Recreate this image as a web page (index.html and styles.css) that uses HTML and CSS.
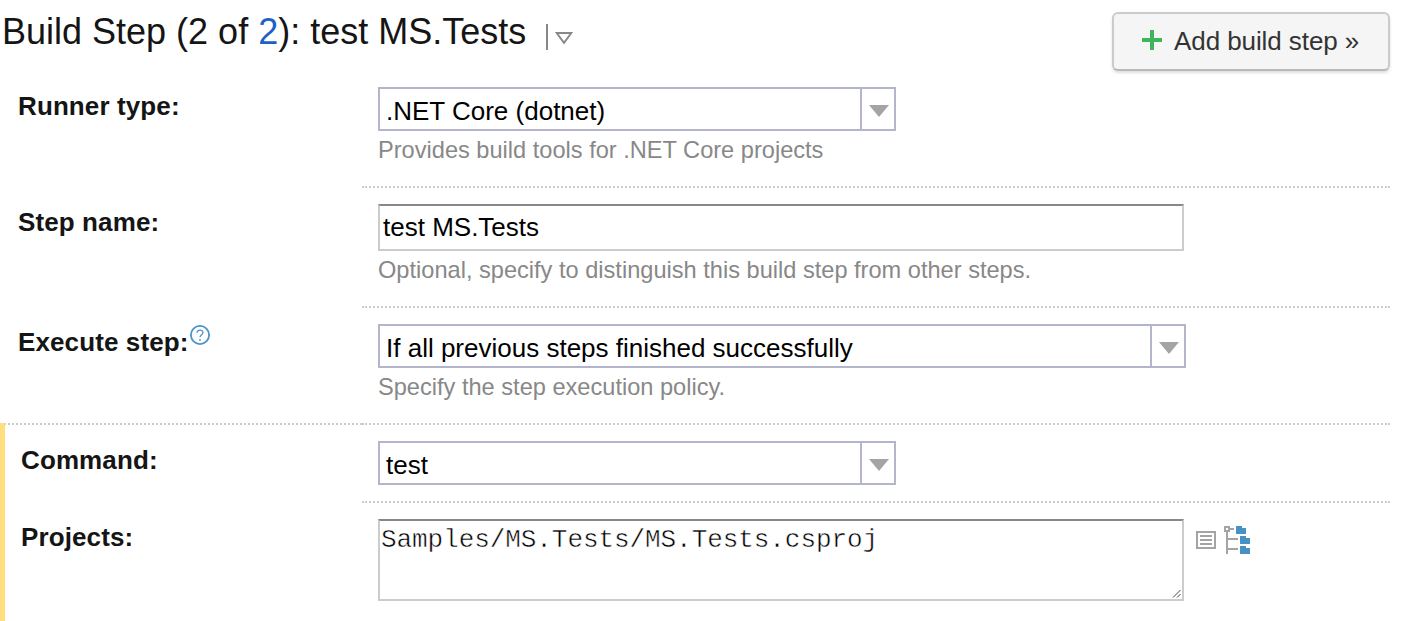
FILE: index.html
```html
<!DOCTYPE html>
<html lang="en">
<head>
<meta charset="utf-8">
<title>Build Step</title>
<link rel="stylesheet" href="styles.css">
</head>
<body>
<header class="header">
  <h1 class="title">Build Step (2 of <a class="count">2</a>): test MS.Tests</h1>
  <span class="title-menu"><svg width="18" height="14" viewBox="0 0 18 14"><path d="M1.7 2H16.3L9 11.8Z" fill="none" stroke="#888" stroke-width="1.9"/></svg></span>
  <button class="add-button"><svg class="plus" width="20" height="20" viewBox="0 0 20 20"><path d="M8 0h4v8h8v4h-8v8H8v-8H0V8h8z" fill="#3fb55d"/></svg><span>Add build step »</span></button>
</header>
<main class="form">
  <section class="row row-runner">
    <div class="label">Runner type:</div>
    <div class="field">
      <div class="select"><span class="value">.NET Core (dotnet)</span><span class="arrow"><svg width="20" height="12" viewBox="0 0 20 12"><path d="M0 0H20L10 12Z" fill="#a4a4a4"/></svg></span></div>
      <p class="note">Provides build tools for .NET Core projects</p>
    </div>
  </section>
  <section class="row row-name">
    <div class="label">Step name:</div>
    <div class="field">
      <div class="input">test MS.Tests</div>
      <p class="note">Optional, specify to distinguish this build step from other steps.</p>
    </div>
  </section>
  <section class="row row-execute">
    <div class="label">Execute step:<svg class="help" width="20" height="20" viewBox="0 0 20 20" fill="none" stroke="#4a94c8"><circle cx="10" cy="10" r="9.1" stroke-width="1.8"/><path d="M7 7.8C7 4.2 13 4.2 13 7.6C13 9.8 10 9.6 10 12.3" stroke-width="1.3"/><path d="M10 14v1.8" stroke-width="1.5"/></svg></div>
    <div class="field">
      <div class="select wide"><span class="value">If all previous steps finished successfully</span><span class="arrow"><svg width="20" height="12" viewBox="0 0 20 12"><path d="M0 0H20L10 12Z" fill="#a4a4a4"/></svg></span></div>
      <p class="note">Specify the step execution policy.</p>
    </div>
  </section>
  <div class="group">
    <section class="row row-command">
      <div class="label">Command:</div>
      <div class="field">
        <div class="select"><span class="value">test</span><span class="arrow"><svg width="20" height="12" viewBox="0 0 20 12"><path d="M0 0H20L10 12Z" fill="#a4a4a4"/></svg></span></div>
      </div>
    </section>
    <section class="row row-projects">
      <div class="label">Projects:</div>
      <div class="field projects">
        <div class="textarea"><span>Samples/MS.Tests/MS.Tests.csproj</span><svg class="grip" width="9" height="9" viewBox="0 0 9 9"><path d="M1 8.5L8.5 1M5 8.5L8.5 5" stroke="#444" stroke-width="1"/></svg></div>
        <svg class="list-icon" width="20" height="18" viewBox="0 0 20 18" shape-rendering="crispEdges"><path d="M1 1H19V17H1ZM4 5H16M4 9H16M4 13H16" fill="none" stroke="#a4a4a4" stroke-width="2"/></svg>
        <svg class="tree-icon" width="26" height="28" viewBox="0 0 26 28" shape-rendering="crispEdges"><path d="M1 1H5V5H1ZM6 3H10M3 6V28M4 13H14M4 23H14" fill="none" stroke="#a4a4a4" stroke-width="2"/><path d="M12 0h6v2h4v6H12zM16 10h6v2h4v6H16zM16 20h6v2h4v6H16z" fill="#4891c5"/></svg>
      </div>
    </section>
  </div>
</main>
</body>
</html>
```
FILE: styles.css
```css
* { box-sizing: border-box; }
body {
  margin: 0;
  width: 1408px;
  height: 621px;
  overflow: hidden;
  background: #fff;
  color: #151515;
  font: 26px/30px "Liberation Sans", Arial, sans-serif;
}
svg { display: block; flex: none; }
.header { display: flex; height: 71px; padding: 12px 18px 0 2px; }
.title { margin: 0; font-size: 36px; font-weight: 400; line-height: 40px; white-space: nowrap; }
.count { color: #1a62c5; }
.title-menu {
  height: 26px;
  margin: 12px 0 0 20px;
  padding: 7px 0 0 7px;
  border-left: 2px solid #888;
}
.add-button {
  display: flex;
  align-items: flex-start;
  width: 278px;
  height: 59px;
  margin-left: auto;
  padding: 12px 0 0 28px;
  gap: 12px;
  border: 2px solid #cbcbcb;
  border-bottom-color: #b8b8b8;
  border-radius: 6px;
  background: #f5f5f5;
  box-shadow: 0 2px 3px rgba(0, 0, 0, .13);
  color: #333;
  font: inherit;
  letter-spacing: -.08px;
  white-space: nowrap;
}
.plus { margin-top: 4px; }
.row { display: grid; grid-template-columns: 362px 1028px; }
.label { display: flex; padding: 17px 0 0 18px; font-weight: 700; letter-spacing: .11px; }
.field { padding: 16px 0 0 16px; border-bottom: 2px dotted #ccc; }
.row-runner { height: 117px; }
.row-runner .label { padding-top: 20px; }
.row-name { height: 120px; }
.row-name .label { padding-top: 19px; }
.row-execute { height: 117px; }
.row-execute .label { padding-top: 19px; border-bottom: 2px dotted #ccc; }
.help { margin: -2px 0 0 1px; }
.select {
  display: flex;
  width: 518px;
  height: 44px;
  border: 2px solid #b3b6ca;
  color: #000;
}
.select.wide { width: 808px; }
.value { flex: 1; padding: 7px 0 0 6px; white-space: nowrap; }
.arrow { width: 34px; padding: 16px 0 0 7px; border-left: 2px solid #b3b6ca; }
.input {
  width: 806px;
  height: 47px;
  padding: 6px 3px;
  border: 2px solid #ccc;
  border-top-color: #888;
  color: #000;
}
.note { margin: 4px 0 0; color: #888; font-size: 23.6px; line-height: 30px; white-space: nowrap; }
.group { position: relative; height: 198px; margin-top: -2px; border-left: 5px solid #ffde7f; }
.group .row { grid-template-columns: 357px 1028px; }
.group .label { padding-left: 16px; }
.row-command { height: 80px; }
.row-command .label { padding-top: 22px; }
.row-command .field { padding-top: 18px; }
.row-projects { height: 118px; }
.row-projects .label { padding-top: 19px; }
.projects { display: flex; border: 0; }
.textarea {
  display: flex;
  justify-content: space-between;
  width: 806px;
  height: 82px;
  padding: 4px 1px;
  border: 2px solid #ccc;
  border-top-color: #888;
  color: #000;
  font-family: "Liberation Mono", "Courier New", monospace;
  letter-spacing: -.07px;
  -webkit-text-stroke: .5px #fff;
}
.grip { align-self: flex-end; margin-bottom: -3px; }
.list-icon { margin: 12px 0 0 12px; }
.tree-icon { margin: 7px 0 0 8px; }
```
